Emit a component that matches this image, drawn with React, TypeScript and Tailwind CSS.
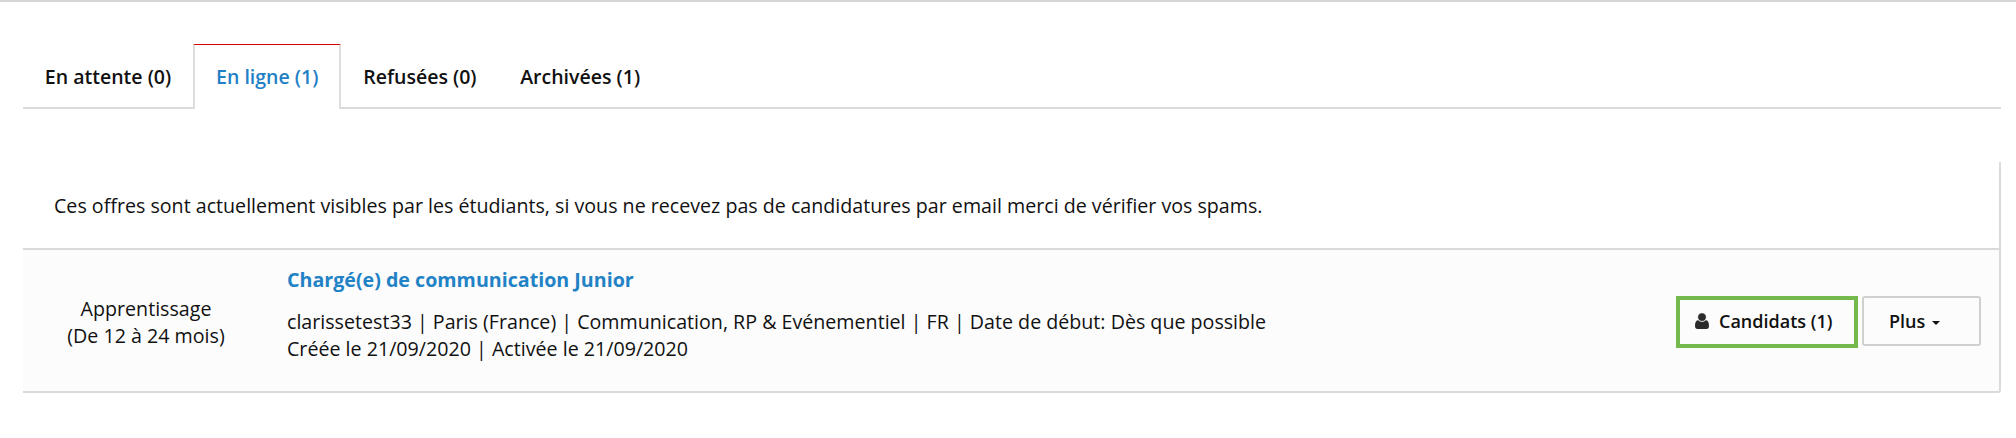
const tabs = [
  { label: 'En attente (0)', active: false },
  { label: 'En ligne (1)', active: true },
  { label: 'Refusées (0)', active: false },
  { label: 'Archivées (1)', active: false },
]

const UserIcon = () => {
  return (
    <svg
      viewBox="0 0 14 16"
      fill="currentColor"
      className="mr-[10px] h-4 w-[14px] text-[#2b2b2b]"
    >
      <path d="M3.400 7.200C1 7.200 0 9.200 0 13c0 1.800 1 3 2.500 3h9c1.500 0 2.500-1.200 2.500-3 0-3.800-1-5.800-3.400-5.800C9.600 8.200 8.400 8.700 7 8.700S4.400 8.200 3.400 7.200z" />
      <circle cx="7" cy="4.100" r="4.300" className="stroke-[#fcfcfc]" strokeWidth="0.7" />
    </svg>
  )
}

const Tabs = () => {
  return (
    <nav className="flex h-[66px]">
      {tabs.map(({ label, active }) =>
        active ? (
          <button
            key={label}
            className="mt-px h-[65px] border-x-2 border-t border-x-[#dedede] border-t-[#d40000] px-[21px] pb-0.5 text-[19.55px] font-semibold text-[#1f80c6]"
          >
            {label}
          </button>
        ) : (
          <button
            key={label}
            className="h-[66px] border-b-2 border-[#dadada] px-[21.8px] pt-0.5 text-[19.55px] font-semibold text-[#111]"
          >
            {label}
          </button>
        )
      )}
      <div className="grow border-b-2 border-[#dadada]" />
    </nav>
  )
}

const Offer = () => {
  return (
    <div className="flex h-[145px] items-center border-y-2 border-[#dadada] bg-[#fcfcfc]">
      <div className="w-[246px] pt-0.5 text-center">
        <p>Apprentissage</p>
        <p>(De 12 à 24 mois)</p>
      </div>
      <div className="mb-[13px] ml-[18px]">
        <h2 className="mb-[15px] font-bold text-[#2282c6]">
          Chargé(e) de communication Junior
        </h2>
        <p>
          clarissetest33 | Paris (France) | Communication, RP &amp; Evénementiel
          | FR | Date de début: Dès que possible
        </p>
        <p>Créée le 21/09/2020 | Activée le 21/09/2020</p>
      </div>
      <div className="mt-[3px] mr-[18px] ml-auto flex gap-1 text-[18px] font-semibold">
        <button className="flex h-[52px] w-[182px] items-center border-4 border-[#74b94b] pb-0.5 pl-[15px]">
          <UserIcon />
          Candidats (1)
        </button>
        <button className="flex h-[50px] w-[119px] items-center rounded-[3px] border-2 border-[#d0d0d0] pl-[25px]">
          Plus
          <span className="mt-[3px] ml-[7px] border-x-4 border-t-4 border-x-transparent border-t-[#111]" />
        </button>
      </div>
    </div>
  )
}

const App = () => {
  return (
    <main className="h-[438px] border-t-2 border-[#d6d6d6] bg-white pt-[41px] pr-[15px] pl-[23px] font-['Open_Sans',sans-serif] text-[19.65px] leading-[27px] text-[#111]">
      <Tabs />
      <section className="mt-[53px] rounded-br-[3px] border-r-2 border-[#dadada]">
        <p className="flex h-[86px] items-center pl-[31px]">
          Ces offres sont actuellement visibles par les étudiants, si vous ne
          recevez pas de candidatures par email merci de vérifier vos spams.
        </p>
        <Offer />
      </section>
    </main>
  )
}

export default App
